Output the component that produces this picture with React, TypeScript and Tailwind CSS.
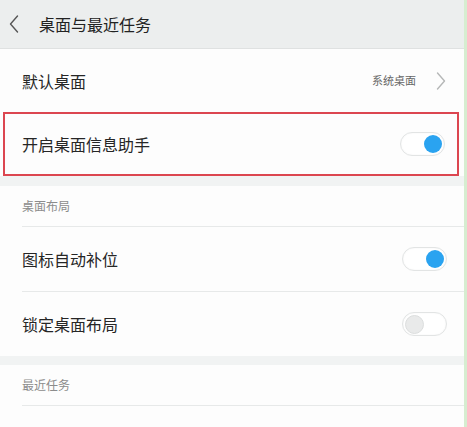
import React from "react";

const Toggle = ({ on }: { on: boolean }) => (
  <div className="w-[45px] h-[24px] rounded-full border border-[#e2e4e4] bg-white flex items-center px-[2px] shadow-[inset_0_0_2px_rgba(0,0,0,0.06)]">
    {on ? (
      <div className="ml-auto w-[18px] h-[18px] rounded-full bg-[#2aa3f0]" />
    ) : (
      <div className="w-[19px] h-[19px] rounded-full bg-[#e9eaea] border border-[#dcdede]" />
    )}
  </div>
);

const Chevron = ({ left }: { left?: boolean }) => (
  <svg width="10" height="18" viewBox="0 0 10 18" fill="none">
    <path
      d={left ? "M8.5 1 L1.5 9 L8.5 17" : "M1.5 1 L8.5 9 L1.5 17"}
      stroke={left ? "#555" : "#b5b7b7"}
      strokeWidth="1.4"
      strokeLinecap="round"
      strokeLinejoin="round"
    />
  </svg>
);

const Row = ({ label, on }: { label: string; on: boolean }) => (
  <div className="h-[64px] shrink-0 flex items-center justify-between pl-[22px] pr-[17px]">
    <span className="text-[16px] text-[#262626]">{label}</span>
    <Toggle on={on} />
  </div>
);

const SectionTitle = ({ title }: { title: string }) => (
  <div className="h-[41px] shrink-0 flex items-center border-b border-[#e7e9e9] ml-[22px]">
    <span className="text-[12px] text-[#8c8c8c]">{title}</span>
  </div>
);

export default function App() {
  return (
    <div
      className="w-[467px] h-[427px] overflow-hidden flex bg-white"
      style={{ fontFamily: '"Noto Sans CJK SC", "Noto Sans", sans-serif' }}
    >
      <div className="flex-1 flex flex-col bg-[#fdfdfd]">
        <div className="h-[49px] shrink-0 bg-[#eceeee] border-b border-[#dfe1e1] flex items-center pl-[9px] gap-[20px]">
          <Chevron left />
          <span className="text-[16px] text-[#222]">桌面与最近任务</span>
        </div>

        <div className="h-[63px] shrink-0 flex items-center justify-between pl-[22px] pr-[18px]">
          <span className="text-[16px] text-[#262626]">默认桌面</span>
          <div className="flex items-center gap-[20px]">
            <span className="text-[11px] text-[#666]">系统桌面</span>
            <Chevron />
          </div>
        </div>

        {/* highlighted row */}
        <div className="h-[64px] shrink-0 ml-[3px] mr-[5px] border-2 border-[#dc4650] flex items-center justify-between pl-[17px] pr-[12px]">
          <span className="text-[16px] text-[#262626]">开启桌面信息助手</span>
          <Toggle on />
        </div>

        <div className="h-[10px] shrink-0 bg-[#f1f3f3]" />

        <SectionTitle title="桌面布局" />
        <div className="shrink-0 border-b border-[#e7e9e9] ml-[22px]">
          <div className="-ml-[22px]">
            <Row label="图标自动补位" on />
          </div>
        </div>
        <Row label="锁定桌面布局" on={false} />

        <div className="h-[9px] shrink-0 bg-[#f1f3f3]" />

        <SectionTitle title="最近任务" />
        <div className="h-[64px] shrink-0 flex items-end justify-end pr-[24px]">
          <div className="w-[32px] h-[4px] rounded-t-full border border-b-0 border-[#e2e4e4]" />
        </div>
      </div>
      <div className="w-[3px] shrink-0 bg-[#d6edd0]" />
    </div>
  );
}
